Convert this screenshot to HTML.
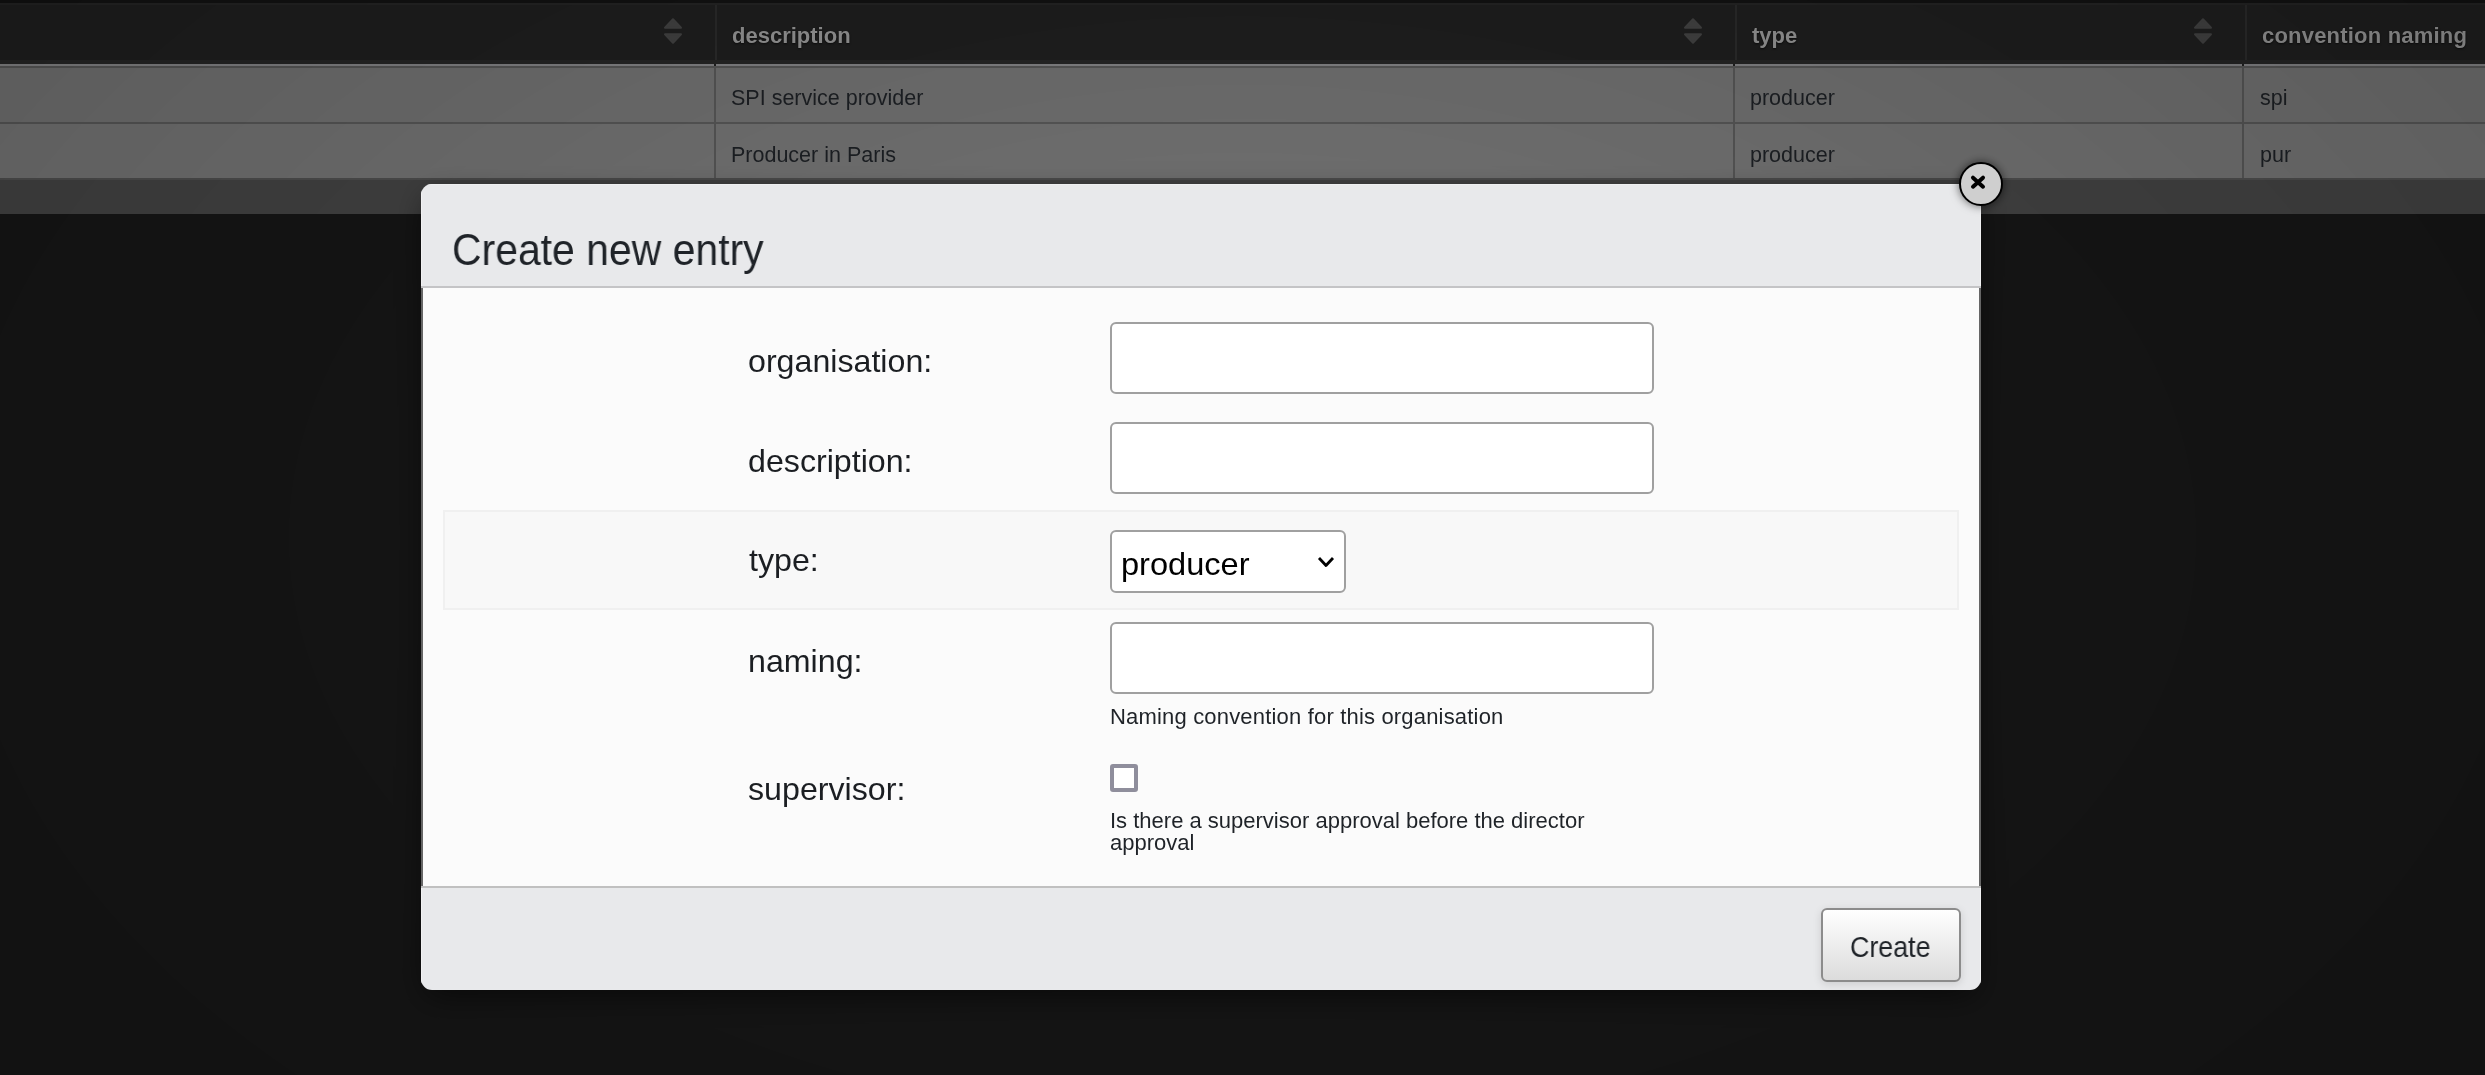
<!DOCTYPE html>
<html>
<head>
<meta charset="utf-8">
<style>
html,body{margin:0;padding:0;}
body{width:2485px;height:1075px;overflow:hidden;position:relative;background:#151515;font-family:"Liberation Sans",sans-serif;}
.a{position:absolute;}
.t{position:absolute;white-space:nowrap;line-height:1;will-change:transform;-webkit-font-smoothing:antialiased;}
</style>
</head>
<body>
<!-- table background strips -->
<div class="a" style="left:0;top:0;width:2485px;height:3px;background:#111"></div>
<div class="a" style="left:0;top:3px;width:2485px;height:2px;background:#222"></div>
<div class="a" style="left:0;top:5px;width:2485px;height:55px;background:#1d1d1d"></div>
<div class="a" style="left:0;top:60px;width:2485px;height:4px;background:#232323"></div>
<div class="a" style="left:0;top:64px;width:2485px;height:2px;background:#7b7b7d"></div>
<div class="a" style="left:0;top:66px;width:2485px;height:2px;background:#525252"></div>
<div class="a" style="left:0;top:68px;width:2485px;height:54px;background:#6a6a6a"></div>
<div class="a" style="left:0;top:122px;width:2485px;height:2px;background:#525252"></div>
<div class="a" style="left:0;top:124px;width:2485px;height:54px;background:#6c6c6c"></div>
<div class="a" style="left:0;top:178px;width:2485px;height:2px;background:#4a4a4a"></div>
<div class="a" style="left:0;top:180px;width:2485px;height:34px;background:#3f3f3f"></div>

<!-- header column borders -->
<div class="a" style="left:715px;top:5px;width:2px;height:55px;background:#282828"></div>
<div class="a" style="left:1735px;top:5px;width:2px;height:55px;background:#282828"></div>
<div class="a" style="left:2245px;top:5px;width:2px;height:55px;background:#282828"></div>
<!-- row column borders -->
<div class="a" style="left:714px;top:64px;width:2px;height:2px;background:#1e1e1e"></div>
<div class="a" style="left:1733px;top:64px;width:2px;height:2px;background:#1e1e1e"></div>
<div class="a" style="left:2242px;top:64px;width:2px;height:2px;background:#1e1e1e"></div>
<div class="a" style="left:714px;top:66px;width:2px;height:112px;background:#525252"></div>
<div class="a" style="left:1733px;top:66px;width:2px;height:112px;background:#525252"></div>
<div class="a" style="left:2242px;top:66px;width:2px;height:112px;background:#525252"></div>

<!-- sort icons -->
<svg class="a" style="left:0;top:0" width="2485" height="60">
 <g fill="#3e3e3e" stroke="#3e3e3e" stroke-width="2" stroke-linejoin="round">
  <path d="M673 19.2 L681 27.8 L665 27.8 Z M665 34.2 L681 34.2 L673 42.8 Z"/>
  <path d="M1693 19.2 L1701 27.8 L1685 27.8 Z M1685 34.2 L1701 34.2 L1693 42.8 Z"/>
  <path d="M2203 19.2 L2211 27.8 L2195 27.8 Z M2195 34.2 L2211 34.2 L2203 42.8 Z"/>
 </g>
</svg>

<!-- header text -->
<div class="t" style="left:732px;top:25.4px;font-size:22px;font-weight:bold;color:#8c8c8c;text-shadow:0 1px 2px rgba(0,0,0,0.6)">description</div>
<div class="t" style="left:1752px;top:25.4px;font-size:22px;font-weight:bold;color:#8c8c8c;text-shadow:0 1px 2px rgba(0,0,0,0.6)">type</div>
<div class="t" style="left:2262px;top:25.4px;font-size:22px;letter-spacing:0.2px;font-weight:bold;color:#8c8c8c;text-shadow:0 1px 2px rgba(0,0,0,0.6)">convention naming</div>

<!-- row text -->
<div class="t" style="left:731px;top:87.6px;font-size:21.5px;color:#1b1e22">SPI service provider</div>
<div class="t" style="left:1750px;top:87.6px;font-size:21.5px;color:#1b1e22">producer</div>
<div class="t" style="left:2260px;top:87.6px;font-size:21.5px;color:#1b1e22">spi</div>
<div class="t" style="left:731px;top:144.6px;font-size:21.5px;color:#1b1e22">Producer in Paris</div>
<div class="t" style="left:1750px;top:144.6px;font-size:21.5px;color:#1b1e22">producer</div>
<div class="t" style="left:2260px;top:144.6px;font-size:21.5px;color:#1b1e22">pur</div>

<!-- vignette -->
<div class="a" style="left:0;top:0;width:2485px;height:1075px;background:radial-gradient(ellipse 70% 100% at 50% 50%, rgba(0,0,0,0) 0%, rgba(0,0,0,0) 35%, rgba(0,0,0,0.16) 100%)"></div>
<!-- modal -->
<div class="a" id="modal" style="left:421px;top:184px;width:1560px;height:806px;border-radius:11px;background:#e8e9eb;overflow:hidden;box-shadow:0 10px 32px -6px rgba(0,0,0,0.6)">
  <div class="a" style="left:0;top:0;width:1px;height:806px;background:#f1f1f2"></div>
  <div class="a" style="right:0;top:0;width:1px;height:806px;background:#f1f1f2"></div>
  <div class="a" style="left:0;top:0;width:1560px;height:1px;background:#eeeff0"></div>
  <!-- header border -->
  <div class="a" style="left:0;top:102px;width:1560px;height:2px;background:#c4c4c6"></div>
  <!-- body -->
  <div class="a" style="left:0;top:104px;width:1556px;height:598px;background:#fbfbfb;border-left:2px solid #666;border-right:2px solid #666"></div>
  <!-- footer border -->
  <div class="a" style="left:0;top:702px;width:1560px;height:2px;background:#c0c0c0"></div>
</div>

<div class="t" style="left:452px;top:228px;font-size:44px;color:#1f2328;transform:scaleX(0.93);transform-origin:0 0">Create new entry</div>

<!-- type band -->
<div class="a" style="left:443px;top:510px;width:1512px;height:96px;border:2px solid #f0f0f0;background:#f8f8f8"></div>

<!-- labels -->
<div class="t" style="left:748px;top:345.8px;font-size:30.5px;color:#1b1e22;transform:scaleX(1.055);transform-origin:0 0">organisation:</div>
<div class="t" style="left:748px;top:445.8px;font-size:30.5px;color:#1b1e22;transform:scaleX(1.055);transform-origin:0 0">description:</div>
<div class="t" style="left:749px;top:545.3px;font-size:30.5px;color:#1b1e22;transform:scaleX(1.055);transform-origin:0 0">type:</div>
<div class="t" style="left:748px;top:645.8px;font-size:30.5px;color:#1b1e22;transform:scaleX(1.055);transform-origin:0 0">naming:</div>
<div class="t" style="left:748px;top:773.8px;font-size:30.5px;color:#1b1e22;transform:scaleX(1.055);transform-origin:0 0">supervisor:</div>

<!-- inputs -->
<div class="a" style="left:1110px;top:322px;width:540px;height:68px;border:2px solid #a0a0a0;border-radius:6px;background:#fff"></div>
<div class="a" style="left:1110px;top:422px;width:540px;height:68px;border:2px solid #a0a0a0;border-radius:6px;background:#fff"></div>
<div class="a" style="left:1110px;top:622px;width:540px;height:68px;border:2px solid #a0a0a0;border-radius:6px;background:#fff"></div>

<!-- select -->
<div class="a" style="left:1110px;top:530px;width:232px;height:59px;border:2px solid #a0a0a0;border-radius:6px;background:#fff"></div>
<div class="t" style="left:1121px;top:549px;font-size:30.5px;color:#000;transform:scaleX(1.068);transform-origin:0 0">producer</div>
<svg class="a" style="left:1310px;top:550px" width="30" height="24"><polyline points="9,8 16,15.5 23,8" fill="none" stroke="#000" stroke-width="2.8" stroke-linejoin="round"/></svg>

<!-- help texts -->
<div class="t" style="left:1110px;top:705.5px;font-size:22px;letter-spacing:0.18px;color:#1f2328">Naming convention for this organisation</div>
<div class="a" style="left:1110px;top:764px;width:20px;height:20px;border:4px solid #8f8e9c;border-radius:3px;background:#fff"></div>
<div class="t" style="left:1110px;top:809.6px;font-size:22px;color:#1f2328">Is there a supervisor approval before the director</div>
<div class="t" style="left:1110px;top:831.5px;font-size:22px;color:#1f2328">approval</div>

<!-- button -->
<div class="a" style="left:1821px;top:908px;width:136px;height:70px;border:2px solid #8c8c8c;border-radius:6px;background:linear-gradient(#ffffff,#dcdcdc);box-shadow:0 2px 8px rgba(0,0,0,0.12)"></div>
<div class="t" style="left:1850px;top:932.5px;font-size:29px;color:#1f2328;transform:scaleX(0.925);transform-origin:0 0">Create</div>

<!-- close button -->
<div class="a" style="left:1959px;top:162px;width:40px;height:40px;border:2px solid #000;border-radius:50%;background:#cfcfcf;box-shadow:0 0 10px rgba(0,0,0,0.6)"></div>
<svg class="a" style="left:1960px;top:165px" width="36" height="36"><path d="M13 12.7 L23 21.7 M23 12.7 L13 21.7" stroke="#000" stroke-width="4" stroke-linecap="round"/></svg>
</body>
</html>
